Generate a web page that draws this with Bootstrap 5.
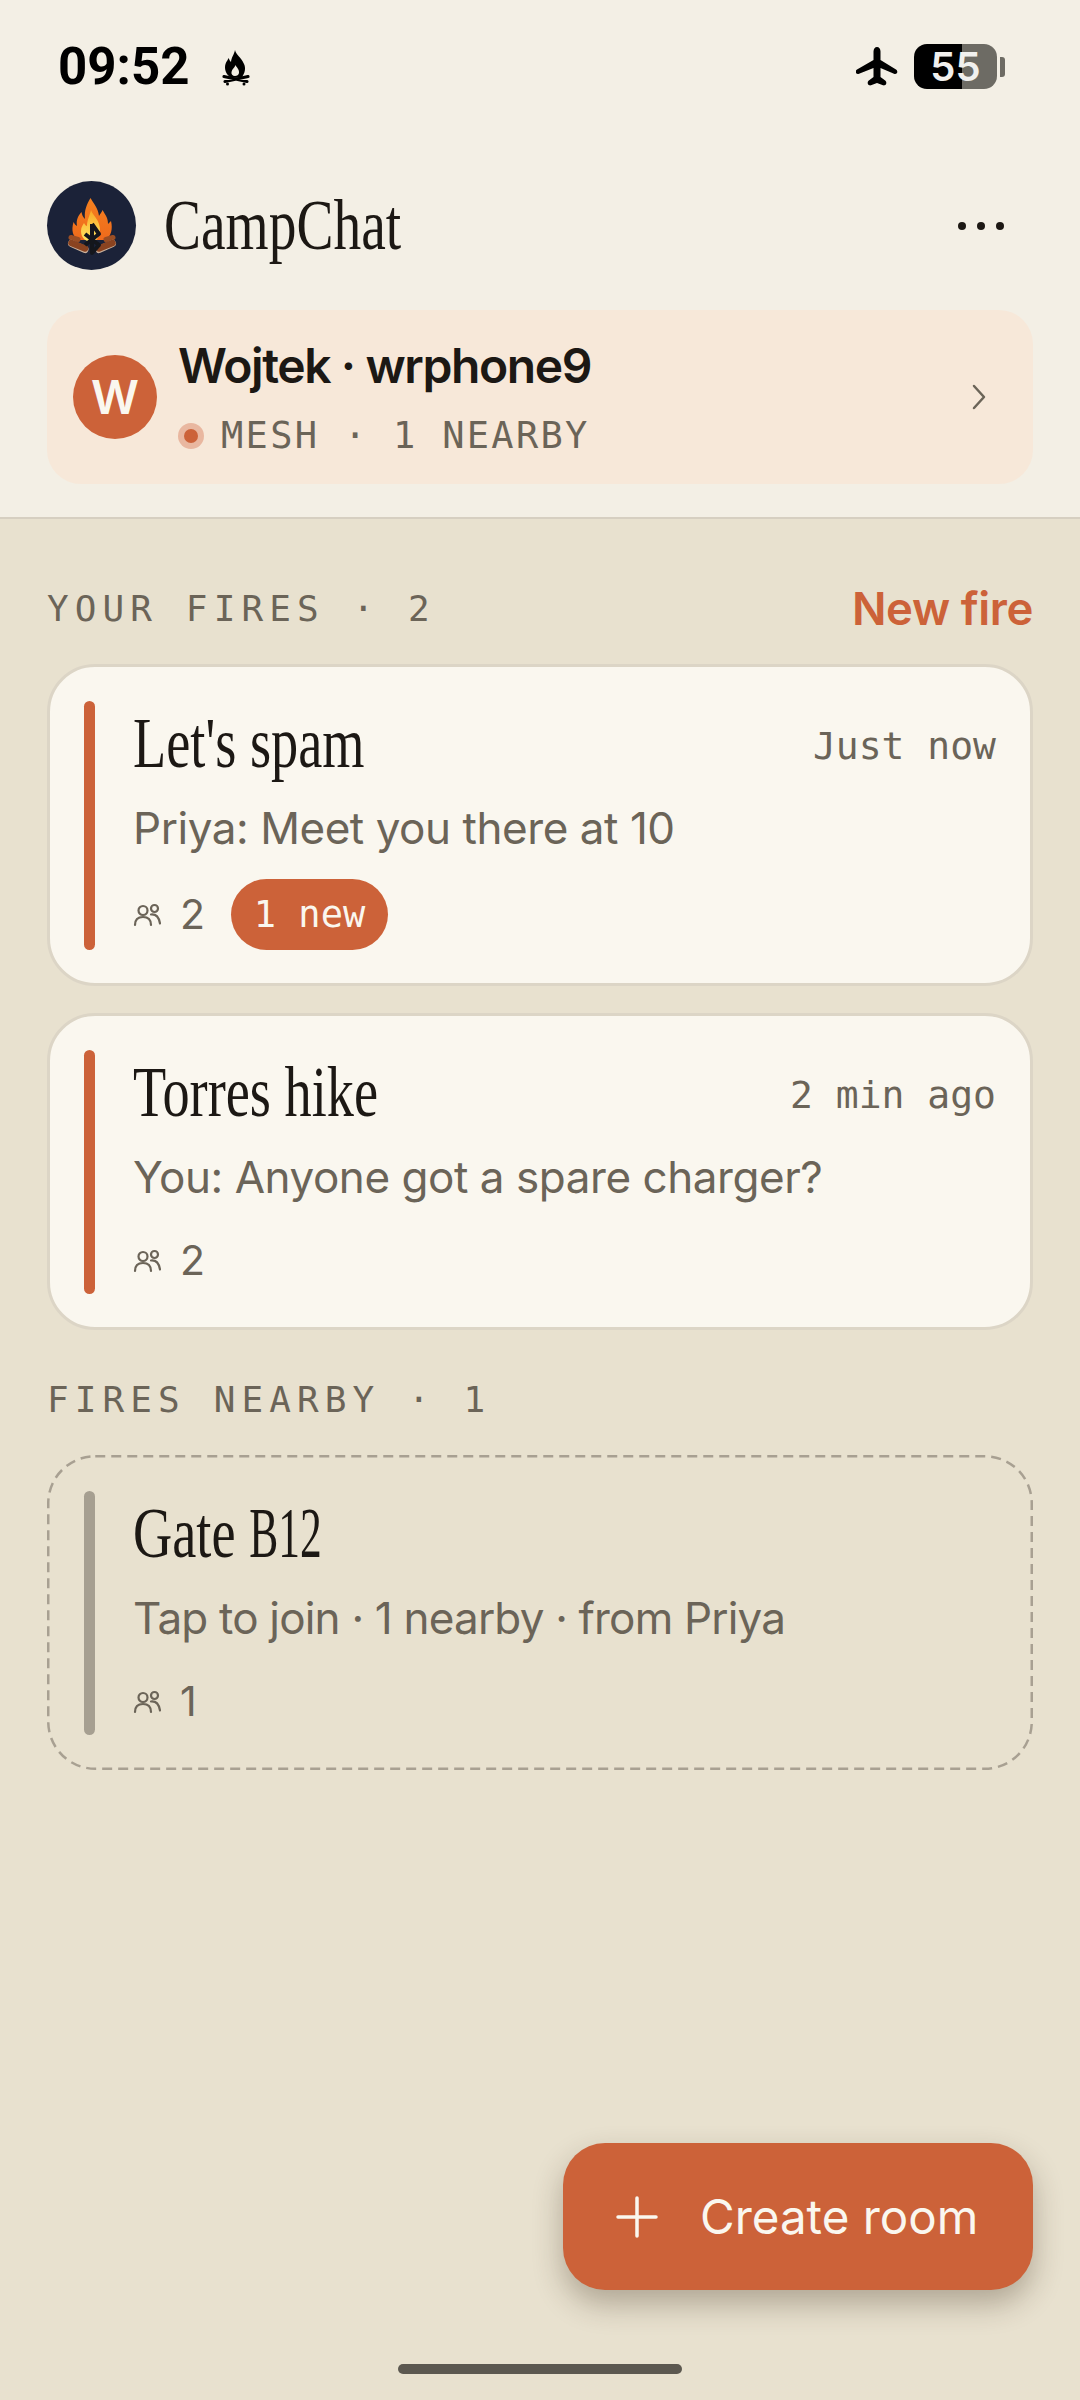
<!DOCTYPE html>
<html lang="en">
<head>
<meta charset="UTF-8">
<title>CampChat</title>
<link href="https://cdn.jsdelivr.net/npm/bootstrap@5.3.0/dist/css/bootstrap.min.css" rel="stylesheet">
<style>
  body { background: #e8e1cf; font-family: Inter, sans-serif; color: #1c1814; }
  .phone { width: 1080px; height: 2400px; overflow: hidden; }
  .top-pane { background: #f3efe5; border-bottom: 2px solid #d6cfc1; padding: 41px 47px 33px 47px; }
  .status-row { height: 51px; padding-left: 11px; }
  .clock { font-family: Roboto, sans-serif; font-weight: 700; font-size: 51px; line-height: 51px; color: #000; width: 164px; }
  .batt { width: 83px; height: 45px; border-radius: 13px; background: linear-gradient(90deg, #000 58%, #6d6b64 58%); color: #f1f0ee; font-family: Inter, sans-serif; font-weight: 600; font-size: 40px; line-height: 45px; }
  .batt-nub { width: 5px; height: 20px; background: #6d6b64; border-radius: 0 3px 3px 0; margin-left: 3px; margin-right: 28px; }
  .app-bar { margin-top: 89px; height: 89px; }
  .app-logo { width: 89px; height: 89px; background: #1b2238; }
  .serif-t { font-family: "Liberation Serif", serif; font-weight: 400; color: #1c1814; display: inline-block; transform-origin: left center; white-space: nowrap; }
  .app-name { font-size: 72px; line-height: 89px; margin-left: 28px; transform: scaleX(.77); }
  .dots { gap: 11px; margin-right: 29px; }
  .dots span { width: 8px; height: 8px; background: #1c1814; }
  .id-card { margin-top: 40px; height: 174px; background: #f7e8d9; border-radius: 34px; padding: 0 47px 0 26px; }
  .avatar { width: 84px; height: 84px; background: #cc6239; color: #faf7ef; font-weight: 600; font-size: 47px; }
  .id-text { margin-left: 21px; }
  .id-name { font-weight: 600; font-size: 48px; line-height: 56px; letter-spacing: -1.4px; white-space: nowrap; margin-top: 3px; }
  .mono-t { font-family: "DejaVu Sans Mono", monospace; color: #6b6458; white-space: nowrap; }
  .id-line { margin-top: 18px; }
  .id-sub { font-size: 37px; letter-spacing: 2.3px; line-height: 48px; margin-left: 1px; }
  .mesh-dot { width: 26px; height: 26px; background: #e9b7a0; }
  .mesh-dot span { width: 14px; height: 14px; background: #cc6239; }
  .list-pane { padding: 60px 47px 0 47px; }
  .sec-row { height: 60px; margin-bottom: 25px; }
  .sec-row.second { margin-top: 40px; }
  .sec-label { font-size: 36px; letter-spacing: 6.1px; }
  .new-fire { font-weight: 600; font-size: 45.5px; color: #cc6239; letter-spacing: -.4px; }
  .fire-card { background: #faf7ef; border: 3px solid #dcd5c6; border-radius: 48px; padding: 34px 33px 33px 34px; margin-bottom: 27px; }
  .fire-card.nearby { background: transparent; border: 2px solid transparent; padding: 34px 33px 35px 35px; }
  .dash-edge { left: -2px; top: -2px; }
  .fire-bar { width: 11px; background: #cc6239; border-radius: 6px; margin-right: 38px; }
  .nearby .fire-bar { background: #a69f91; }
  .fire-title { font-size: 71px; line-height: 84px; transform: scaleX(.765); }
  .tight-code { display: inline-block; transform: scaleX(.8); transform-origin: left center; }
  .fire-time { font-size: 38px; padding-top: 6px; margin-right: 1px; }
  .fire-sub { font-size: 44px; line-height: 60px; margin-top: 13px; color: #6b6458; letter-spacing: -.45px; white-space: nowrap; }
  .nearby .fire-sub { letter-spacing: -.8px; }
  .fire-meta { min-height: 66px; margin-top: 21px; }
  .fire-count { font-size: 41px; color: #6b6458; margin-left: 19px; margin-right: 26px; }
  .new-pill { height: 71px; width: 157px; background: #cc6239; color: #faf7ef; font-family: "DejaVu Sans Mono", monospace; font-weight: 400; font-size: 37px; line-height: 71px; padding: 0; }
  .fab { right: 47px; top: 2143px; width: 470px; height: 147px; background: #cc6239; color: #faf7ef; border: 0; border-radius: 42px; font-size: 47.5px; box-shadow: 0 14px 30px rgba(60, 45, 25, .32); padding: 0 0 0 53px; }
  .fab:hover { background: #cc6239; color: #faf7ef; }
  .fab-text { margin-left: 42px; }
  .home-bar { left: 398px; top: 2364px; width: 284px; height: 10px; background: #5c5850; }
</style>
</head>
<body>
<div class="phone position-relative">

  <header class="top-pane">
    <div class="status-row d-flex align-items-center">
      <span class="clock">09:52</span>
      <svg width="28" height="38" viewBox="0 0 28 38">
        <path fill="#000" d="M13 2C14 7 19 9 22 16C24 20 23 25 20 29H8C4 26 2 21 3.500 16C4.500 13 6 12 6.500 10C7.500 12 8 13 9 14C9.500 9 12 7 13 2Z"/>
        <path fill="#f3efe5" d="M13.500 17C14 19 17.500 21 17 25C16.700 27 15 28 13 28C10.500 28 9 26 9.500 24C10 21 12.500 20 13.500 17Z"/>
        <path fill="none" stroke="#000" stroke-width="3.200" stroke-linecap="round" d="M2 28.500l23 5M26 28.500l-23 5"/>
        <circle cx="5.500" cy="36" r="1.500"/><circle cx="22" cy="36" r="1.500"/>
      </svg>
      <span class="ms-auto d-inline-flex align-items-center">
        <svg class="me-3" width="42" height="40" viewBox="0 0 42 40" fill="#000">
          <path d="M21 0c2 0 3.500 2 3.500 4.500V13l15.500 9.500c1.500 1 1.500 2.500 1 3.500-.6 1-2 1.300-3 .8L24.500 21v9l5 3.800c1 .8 1 2.500.5 3.500-.5 1-2 1.400-3 1L21 36l-6 2.300c-1 .4-2.500 0-3-1s-.5-2.700.5-3.500l5-3.800v-9L3 26.800c-1 .5-2.400.2-3-.8s-.5-2.500 1-3.500L17.500 13V4.500C17.500 2 19 0 21 0z"/>
        </svg>
        <span class="batt text-center">55</span>
        <span class="batt-nub"></span>
      </span>
    </div>

    <div class="app-bar d-flex align-items-center">
      <span class="app-logo rounded-circle d-flex align-items-center justify-content-center">
        <svg width="60" height="60" viewBox="0 0 60 60">
          <defs>
            <linearGradient id="flameOut" x1="0" y1="0" x2="0" y2="1">
              <stop offset="0" stop-color="#f5811f"/><stop offset="1" stop-color="#ee6a1c"/>
            </linearGradient>
            <linearGradient id="flameIn" x1="0" y1="0" x2="0" y2="1">
              <stop offset="0" stop-color="#f9a825"/><stop offset="1" stop-color="#fee763"/>
            </linearGradient>
          </defs>
          <path fill="url(#flameOut)" d="M28.500 2C33 10 36 12 37 20C38 18 40 16 40.500 14C44 20 46 22 46 28C47 27 48 26 49 25C51 33 49 40 44 44H16C11 40 9 35 11.500 26C12.500 28 13.500 29 15 30C14 24 16 20 19.500 16C20 19 21 21 23 23C22 14 25 8 28.500 2Z"/>
          <path fill="url(#flameIn)" d="M29 14C31 20 38 24 38 34C38 40 34 46 30 46C24 46 19 42 19 35C19 31 21 29 22 27C23 29 24 30 25 30C25 24 28 19 29 14Z"/>
          <g fill="none" stroke-linecap="round">
            <path stroke="#9b4e24" stroke-width="5" d="M9 41.500l7 2M51 41.500l-7 2"/>
            <path stroke="#c9b09c" stroke-width="7" d="M9.500 47.500l13.500 6M50.500 47.500l-13.500 6"/>
            <path stroke="#8a4320" stroke-width="6.500" d="M9.500 47l13.500 5.500M50.500 47l-13.500 5.500"/>
          </g>
          <path fill="none" stroke="#14161c" stroke-width="4" stroke-linejoin="round" d="M30 28V57L37 49L23 38M30 28L37 38L23 49"/>
        </svg>
      </span>
      <span class="serif-t app-name">CampChat</span>
      <span class="dots d-flex ms-auto"><span class="rounded-circle"></span><span class="rounded-circle"></span><span class="rounded-circle"></span></span>
    </div>

    <div class="id-card d-flex align-items-center">
      <span class="avatar rounded-circle d-flex align-items-center justify-content-center flex-shrink-0">W</span>
      <div class="id-text flex-grow-1">
        <div class="id-name">Wojtek · wrphone9</div>
        <div class="id-line d-flex align-items-center">
          <span class="mesh-dot rounded-circle d-flex align-items-center justify-content-center me-3"><span class="rounded-circle"></span></span>
          <span class="mono-t id-sub">MESH · 1 NEARBY</span>
        </div>
      </div>
      <svg width="14" height="26" viewBox="0 0 14 26" fill="none" stroke="#6b6458" stroke-width="2.500" stroke-linecap="round" stroke-linejoin="round">
        <path d="M2 2l10 11L2 24"/>
      </svg>
    </div>
  </header>

  <main class="list-pane">
    <div class="sec-row d-flex justify-content-between align-items-center">
      <span class="mono-t sec-label">YOUR FIRES · 2</span>
      <span class="new-fire">New fire</span>
    </div>

    <div class="fire-card d-flex">
      <span class="fire-bar flex-shrink-0"></span>
      <div class="flex-grow-1">
        <div class="d-flex justify-content-between align-items-center">
          <span class="serif-t fire-title">Let's spam</span>
          <span class="mono-t fire-time">Just now</span>
        </div>
        <div class="fire-sub">Priya: Meet you there at 10</div>
        <div class="fire-meta d-flex align-items-center">
          <svg width="28" height="24" viewBox="0 0 28 24" fill="none" stroke="#6b6458" stroke-width="2.200" stroke-linecap="round">
            <circle cx="10" cy="7.500" r="4.500"/><circle cx="21.500" cy="5.500" r="3.500"/>
            <path d="M2 22c0-5 3-8 8-8s8 3 8 8M18 11.500c5-.5 8 3 9 9"/>
          </svg>
          <span class="fire-count">2</span>
          <span class="badge rounded-pill new-pill">1 new</span>
        </div>
      </div>
    </div>

    <div class="fire-card d-flex">
      <span class="fire-bar flex-shrink-0"></span>
      <div class="flex-grow-1">
        <div class="d-flex justify-content-between align-items-center">
          <span class="serif-t fire-title">Torres hike</span>
          <span class="mono-t fire-time">2 min ago</span>
        </div>
        <div class="fire-sub">You: Anyone got a spare charger?</div>
        <div class="fire-meta d-flex align-items-center">
          <svg width="28" height="24" viewBox="0 0 28 24" fill="none" stroke="#6b6458" stroke-width="2.200" stroke-linecap="round">
            <circle cx="10" cy="7.500" r="4.500"/><circle cx="21.500" cy="5.500" r="3.500"/>
            <path d="M2 22c0-5 3-8 8-8s8 3 8 8M18 11.500c5-.5 8 3 9 9"/>
          </svg>
          <span class="fire-count">2</span>
        </div>
      </div>
    </div>

    <div class="sec-row second d-flex align-items-center">
      <span class="mono-t sec-label">FIRES NEARBY · 1</span>
    </div>

    <div class="fire-card nearby d-flex position-relative">
      <svg class="dash-edge position-absolute" width="986" height="315" fill="none" stroke="#a8a092" stroke-width="2.500" stroke-dasharray="10 6">
        <rect x="1.250" y="1.250" width="983.500" height="312.500" rx="47"/>
      </svg>
      <span class="fire-bar flex-shrink-0"></span>
      <div class="flex-grow-1">
        <div class="d-flex">
          <span class="serif-t fire-title">Gate <span class="tight-code">B12</span></span>
        </div>
        <div class="fire-sub">Tap to join · 1 nearby · from Priya</div>
        <div class="fire-meta d-flex align-items-center">
          <svg width="28" height="24" viewBox="0 0 28 24" fill="none" stroke="#6b6458" stroke-width="2.200" stroke-linecap="round">
            <circle cx="10" cy="7.500" r="4.500"/><circle cx="21.500" cy="5.500" r="3.500"/>
            <path d="M2 22c0-5 3-8 8-8s8 3 8 8M18 11.500c5-.5 8 3 9 9"/>
          </svg>
          <span class="fire-count">1</span>
        </div>
      </div>
    </div>
  </main>

  <button class="btn fab position-absolute d-flex align-items-center" type="button">
    <svg width="42" height="42" viewBox="0 0 42 42" stroke="#faf7ef" stroke-width="3.500" stroke-linecap="round">
      <path d="M21 2v38M2 21h38"/>
    </svg>
    <span class="fab-text">Create room</span>
  </button>
  <div class="home-bar position-absolute rounded-pill"></div>
</div>
<script src="https://cdn.jsdelivr.net/npm/bootstrap@5.3.0/dist/js/bootstrap.bundle.min.js"></script>
</body>
</html>
